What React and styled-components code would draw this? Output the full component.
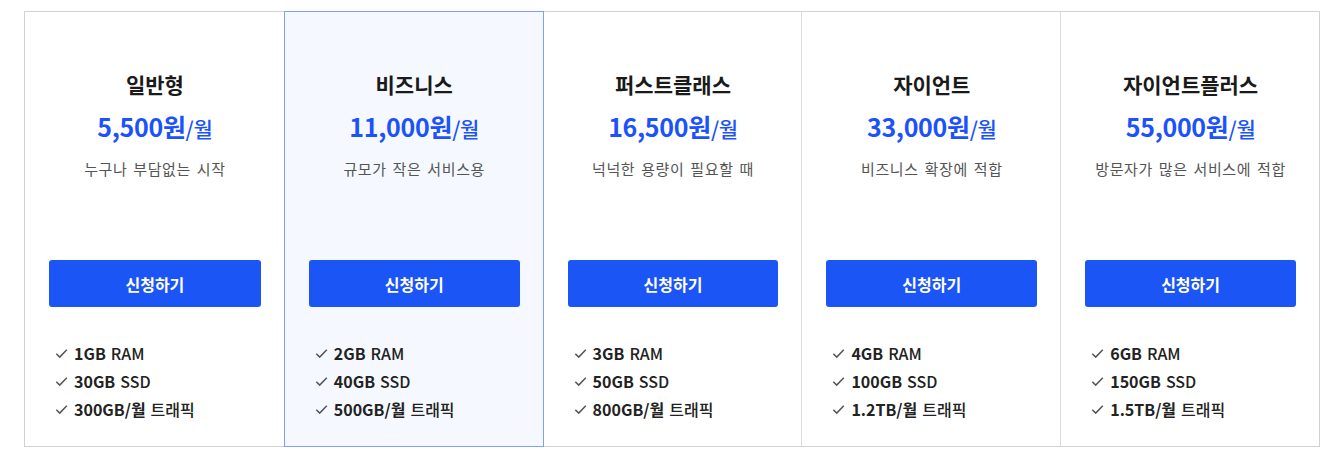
import React from 'react';
import styled, { createGlobalStyle } from 'styled-components';

const GlobalStyle = createGlobalStyle`
  body {
    margin: 0;
    background: #fff;
    font-family: "Noto Sans CJK KR", "Noto Sans", sans-serif;
  }
`;

const Page = styled.div`
  padding: 11px 24px 0;
`;

const Grid = styled.div`
  display: grid;
  grid-template-columns: repeat(5, 1fr);
  border: 1px solid #d2d2d2;
  width: 1296px;
  box-sizing: border-box;
`;

const Plan = styled.div`
  display: flex;
  flex-direction: column;
  align-items: center;
  padding: 57px 23px 23px 24px;
  border-left: 1px solid ${p => (p.$first ? 'transparent' : '#dcdcdc')};
  background: #fff;
  ${p => p.$featured && `
    background: #f5f9ff;
    border: 1px solid #80a0f6;
    margin: -1px -1px -1px 0;
    position: relative;
    z-index: 1;
  `}
  ${p => p.$first && 'border-left: none;'}
`;

const Name = styled.h3`
  margin: 0;
  font-size: 21px;
  line-height: 30px;
  font-weight: 700;
  color: #1a1a1a;
`;

const Price = styled.div`
  margin-top: 9px;
  font-size: 25px;
  line-height: 36px;
  font-weight: 700;
  color: #1c52fa;
  letter-spacing: -0.3px;
  span {
    font-size: 21px;
    font-weight: 500;
  }
`;

const Desc = styled.p`
  margin: 12px 0 0;
  font-size: 15px;
  line-height: 21px;
  color: #555;
  letter-spacing: 0.6px;
  word-spacing: 2px;
`;

const Button = styled.button`
  margin-top: 81px;
  width: 100%;
  height: 47px;
  border: none;
  border-radius: 3px;
  background: #1c55f6;
  color: #fff;
  font-family: inherit;
  font-size: 16px;
  font-weight: 700;
  cursor: pointer;
`;

const Features = styled.ul`
  list-style: none;
  margin: 32px 0 0;
  padding: 0 0 0 6px;
  align-self: stretch;
`;

const Feature = styled.li`
  display: flex;
  align-items: center;
  gap: 6px;
  height: 28px;
  font-size: 16px;
  font-weight: 500;
  color: #222;
  b {
    font-weight: 700;
    margin-right: 5px;
  }
`;

const Check = () => (
  <svg width="13" height="13" viewBox="0 0 13 13" fill="none">
    <polyline points="1.3,6.8 4.7,10.1 11.8,2.8" stroke="#555" strokeWidth="1.5" />
  </svg>
);

const plans = [
  { name: '일반형', price: '5,500원', desc: '누구나 부담없는 시작', f: [['1GB', 'RAM'], ['30GB', 'SSD'], ['300GB/월', '트래픽']] },
  { name: '비즈니스', price: '11,000원', desc: '규모가 작은 서비스용', featured: true, f: [['2GB', 'RAM'], ['40GB', 'SSD'], ['500GB/월', '트래픽']] },
  { name: '퍼스트클래스', price: '16,500원', desc: '넉넉한 용량이 필요할 때', f: [['3GB', 'RAM'], ['50GB', 'SSD'], ['800GB/월', '트래픽']] },
  { name: '자이언트', price: '33,000원', desc: '비즈니스 확장에 적합', f: [['4GB', 'RAM'], ['100GB', 'SSD'], ['1.2TB/월', '트래픽']] },
  { name: '자이언트플러스', price: '55,000원', desc: '방문자가 많은 서비스에 적합', f: [['6GB', 'RAM'], ['150GB', 'SSD'], ['1.5TB/월', '트래픽']] },
];

export default function App() {
  return (
    <Page>
      <GlobalStyle />
      <Grid>
        {plans.map((p, i) => (
          <Plan key={p.name} $first={i === 0} $featured={p.featured}>
            <Name>{p.name}</Name>
            <Price>{p.price}<span>/월</span></Price>
            <Desc>{p.desc}</Desc>
            <Button>신청하기</Button>
            <Features>
              {p.f.map(([a, b]) => (
                <Feature key={b}>
                  <Check />
                  <span><b>{a}</b>{b}</span>
                </Feature>
              ))}
            </Features>
          </Plan>
        ))}
      </Grid>
    </Page>
  );
}
